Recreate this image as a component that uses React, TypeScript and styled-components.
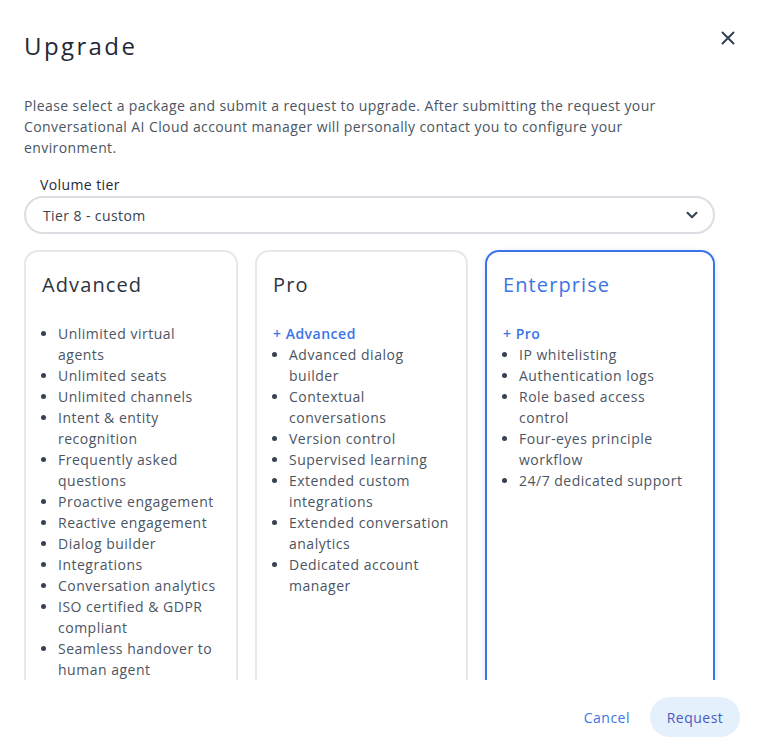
import React from 'react';
import styled, { createGlobalStyle } from 'styled-components';

type Plan = {
  name: string;
  includes?: string;
  features: string[];
  selected?: boolean;
};

const plans: Plan[] = [
  {
    name: 'Advanced',
    features: [
      'Unlimited virtual agents',
      'Unlimited seats',
      'Unlimited channels',
      'Intent & entity recognition',
      'Frequently asked questions',
      'Proactive engagement',
      'Reactive engagement',
      'Dialog builder',
      'Integrations',
      'Conversation analytics',
      'ISO certified & GDPR compliant',
      'Seamless handover to human agent',
    ],
  },
  {
    name: 'Pro',
    includes: '+ Advanced',
    features: [
      'Advanced dialog builder',
      'Contextual conversations',
      'Version control',
      'Supervised learning',
      'Extended custom integrations',
      'Extended conversation analytics',
      'Dedicated account manager',
    ],
  },
  {
    name: 'Enterprise',
    includes: '+ Pro',
    selected: true,
    features: [
      'IP whitelisting',
      'Authentication logs',
      'Role based access control',
      'Four-eyes principle workflow',
      '24/7 dedicated support',
    ],
  },
];

const GlobalStyle = createGlobalStyle`
  html, body {
    margin: 0;
    padding: 0;
    background: #ffffff;
  }
  body {
    font-family: "Open Sans", "Liberation Sans", sans-serif;
    color: #1f2937;
  }
  * {
    box-sizing: border-box;
  }
`;

const App: React.FC = () => {
  return (
    <>
      <GlobalStyle />
      <Dialog>
        <Header>
          <Title>Upgrade</Title>
          <CloseButton aria-label="Close">
            <svg width="14" height="14" viewBox="0 0 14 14" fill="none">
              <path
                d="M1.5 1.5L12.5 12.5M12.5 1.5L1.5 12.5"
                stroke="#334155"
                strokeWidth="2"
                strokeLinecap="round"
              />
            </svg>
          </CloseButton>
        </Header>
        <Body>
          <Intro>
            Please select a package and submit a request to upgrade. After
            submitting the request your Conversational AI Cloud account manager
            will personally contact you to configure your environment.
          </Intro>
          <Label>Volume tier</Label>
          <Select>
            <span>Tier 8 - custom</span>
            <svg width="14" height="14" viewBox="0 0 14 14" fill="none">
              <path
                d="M2.5 4.8L7 9.2L11.5 4.8"
                stroke="#334155"
                strokeWidth="2"
                strokeLinecap="round"
                strokeLinejoin="round"
              />
            </svg>
          </Select>
          <Cards>
            {plans.map((plan) => (
              <Card key={plan.name} $selected={plan.selected}>
                <CardTitle $selected={plan.selected}>{plan.name}</CardTitle>
                <Features>
                  {plan.includes && <Includes>{plan.includes}</Includes>}
                  <ul>
                    {plan.features.map((f) => (
                      <li key={f}>{f}</li>
                    ))}
                  </ul>
                </Features>
              </Card>
            ))}
          </Cards>
        </Body>
        <Footer>
          <TextButton>Cancel</TextButton>
          <PrimaryButton>Request</PrimaryButton>
        </Footer>
      </Dialog>
    </>
  );
};

export default App;

const Dialog = styled.div`
  display: flex;
  flex-direction: column;
  width: 757px;
  height: 747px;
  background: #ffffff;
  overflow: hidden;
`;

const Header = styled.div`
  display: flex;
  align-items: flex-start;
  justify-content: space-between;
  padding: 29px 20px 0 24px;
  height: 95px;
`;

const Title = styled.h1`
  margin: 0;
  font-size: 24px;
  font-weight: 500;
  line-height: 34px;
  letter-spacing: 2.4px;
  color: #1f2937;
`;

const CloseButton = styled.button`
  display: flex;
  align-items: center;
  justify-content: center;
  width: 18px;
  height: 18px;
  padding: 0;
  border: none;
  background: none;
  cursor: pointer;
`;

const Body = styled.div`
  flex: 1;
  min-height: 0;
  overflow: hidden;
  padding: 0 42px 0 24px;
  letter-spacing: 0.4px;
`;

const Intro = styled.p`
  margin: 0 0 16px;
  font-size: 14px;
  line-height: 21px;
  color: #4b5563;
`;

const Label = styled.div`
  padding-left: 16px;
  font-size: 14px;
  line-height: 21px;
  font-weight: 500;
  color: #1f2937;
  margin-bottom: 1px;
`;

const Select = styled.div`
  display: flex;
  align-items: center;
  justify-content: space-between;
  height: 38px;
  padding: 0 14px 0 17px;
  border: 2px solid #dcdee3;
  border-radius: 19px;
  font-size: 14px;
  color: #374151;
  margin-bottom: 16px;
`;

const Cards = styled.div`
  display: grid;
  grid-template-columns: 214px 213px 1fr;
  gap: 17px;
  align-items: stretch;
`;

const Card = styled.div<{ $selected?: boolean }>`
  display: flex;
  flex-direction: column;
  min-height: 520px;
  padding: 19px 16px 20px 16px;
  border: 2px solid ${(p) => (p.$selected ? '#3b74e6' : '#e7e8ec')};
  border-radius: 14px;
  background: #ffffff;
  box-shadow: ${(p) =>
    p.$selected ? '0 2px 6px rgba(59, 116, 230, 0.18)' : 'none'};
`;

const CardTitle = styled.h2<{ $selected?: boolean }>`
  margin: 0 0 24px;
  font-size: 20px;
  font-weight: 500;
  line-height: 28px;
  letter-spacing: 1.1px;
  color: ${(p) => (p.$selected ? '#3b74e6' : '#2d3340')};
`;

const Features = styled.div`
  font-size: 14px;
  line-height: 21px;
  letter-spacing: 0.5px;
  color: #4b5563;

  ul {
    margin: 0;
    padding-left: 16px;
  }
  li::marker {
    color: #374151;
  }
`;

const Includes = styled.div`
  color: #3b74e6;
  font-weight: 600;
`;

const Footer = styled.div`
  display: flex;
  align-items: center;
  justify-content: flex-end;
  gap: 20px;
  height: 67px;
  padding: 7px 17px 0 0;
`;

const TextButton = styled.button`
  padding: 0;
  border: none;
  background: none;
  font-family: inherit;
  font-size: 14px;
  font-weight: 500;
  letter-spacing: 0.5px;
  color: #3b74e6;
  cursor: pointer;
`;

const PrimaryButton = styled.button`
  width: 90px;
  height: 40px;
  border: none;
  border-radius: 20px;
  background: #e5f0fd;
  font-family: inherit;
  font-size: 14px;
  font-weight: 500;
  letter-spacing: 0.5px;
  color: #4a5bbf;
  cursor: pointer;
`;
